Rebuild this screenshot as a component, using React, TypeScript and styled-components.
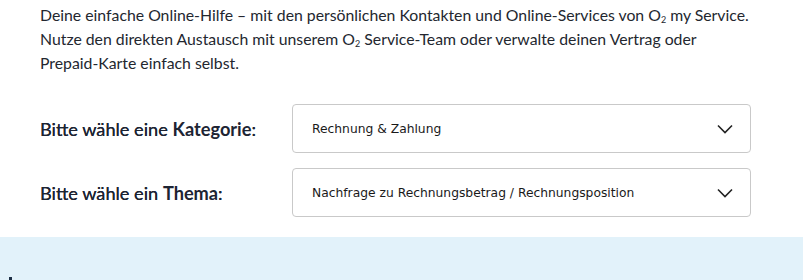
import React from 'react'
import styled, { createGlobalStyle } from 'styled-components'

const GlobalStyle = createGlobalStyle`
    body {
        margin: 0;
        background: #ffffff;
        font-family: Lato, "Open Sans", sans-serif;
        color: #1d2433;
    }
`

const Page = styled.div`
    display: flex;
    flex-direction: column;
    width: 803px;
    height: 280px;
    overflow: hidden;
`

const Intro = styled.section`
    padding: 3px 0 0 40px;
`

const Text = styled.p`
    margin: 0;
    font-size: 15.8px;
    line-height: 24px;
    color: #23272f;
    white-space: nowrap;

    sub {
        font-size: 9px;
        vertical-align: -2px;
        line-height: 0;
    }
`

const Form = styled.div`
    display: flex;
    flex-direction: column;
    gap: 15px;
    margin-top: 29px;
    padding: 0 52px 0 40px;
`

const Row = styled.div`
    display: grid;
    grid-template-columns: 252px 1fr;
    align-items: center;
`

const Label = styled.label`
    font-size: 18.2px;
    color: #1d2433;
    text-shadow: 0 0 0.3px #1d2433;

    b {
        font-weight: 700;
        text-shadow: none;
    }
`

const Select = styled.div`
    display: flex;
    align-items: center;
    justify-content: space-between;
    height: 49px;
    box-sizing: border-box;
    padding: 0 17px 0 19px;
    border: 1px solid #c9c9c9;
    border-radius: 4px;
    background: #fff;
    font-family: "DejaVu Sans", Verdana, sans-serif;
    font-size: 12.3px;
    color: #1a1a1a;
`

const Chevron = () => (
    <svg width="16" height="10" viewBox="0 0 16 10" fill="none">
        <path d="M1 1.5L8 8.5L15 1.5" stroke="#222" strokeWidth="1.6" />
    </svg>
)

const Band = styled.div`
    flex: 1;
    margin-top: 20px;
    background: #e2f2fa;
    position: relative;
`

const Marker = styled.span`
    position: absolute;
    left: 9px;
    bottom: 0;
    width: 3px;
    height: 3px;
    background: #1d2f45;
`

const fields = [
    { label: <>Bitte wähle eine <b>Kategorie</b>:</>, value: 'Rechnung & Zahlung' },
    { label: <>Bitte wähle ein <b>Thema</b>:</>, value: 'Nachfrage zu Rechnungsbetrag / Rechnungsposition' },
]

const App: React.FC = () => (
    <Page>
        <GlobalStyle />
        <Intro>
            <Text>
                Deine einfache Online-Hilfe – mit den persönlichen Kontakten und Online-Services von O<sub>2</sub> my Service.
                <br />
                Nutze den direkten Austausch mit unserem O<sub>2</sub> Service-Team oder verwalte deinen Vertrag oder
                <br />
                Prepaid-Karte einfach selbst.
            </Text>
        </Intro>
        <Form>
            {fields.map((f, i) => (
                <Row key={i}>
                    <Label>{f.label}</Label>
                    <Select>
                        <span>{f.value}</span>
                        <Chevron />
                    </Select>
                </Row>
            ))}
        </Form>
        <Band>
            <Marker />
        </Band>
    </Page>
)

export default App
